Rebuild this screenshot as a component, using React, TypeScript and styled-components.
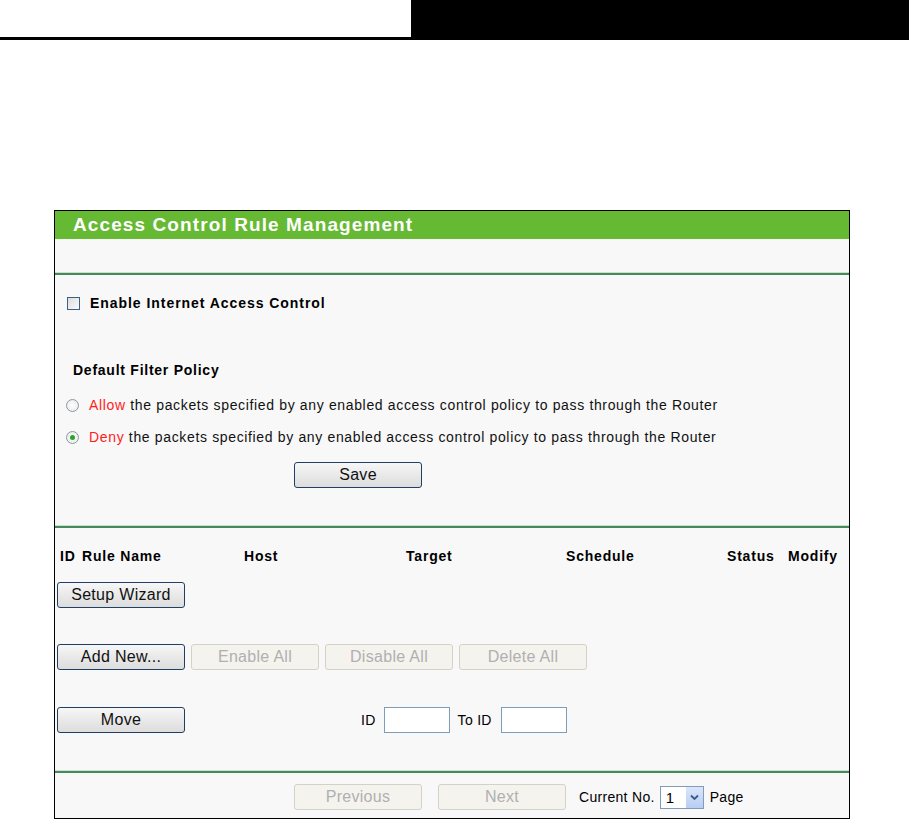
import styled, { createGlobalStyle } from 'styled-components';

const GlobalStyle = createGlobalStyle`
  html, body {
    margin: 0;
    padding: 0;
    background: #ffffff;
  }
  body {
    font-family: 'Liberation Sans', Arial, sans-serif;
    color: #000;
  }
`;

const TopBar = styled.div`
  display: flex;
  height: 40px;
`;

const TopLeft = styled.div`
  width: 411px;
  height: 37px;
  border-bottom: 3px solid #000;
`;

const TopRight = styled.div`
  flex: 1;
  background: #000;
`;

const Panel = styled.div`
  margin: 170px 0 0 54px;
  width: 794px;
  border: 1px solid #000;
  background: #f8f8f8;
  display: flex;
  flex-direction: column;
`;

const Header = styled.div`
  height: 28px;
  background: #66b933;
  color: #fff;
  font-weight: bold;
  font-size: 19px;
  letter-spacing: 1.1px;
  line-height: 28px;
  padding-left: 18px;
`;

const Spacer = styled.div<{ h: number }>`
  height: ${(p) => p.h}px;
  flex-shrink: 0;
`;

const Divider = styled.div`
  height: 2px;
  background: #448a5e;
  border-top: 1px solid #c9e0cf;
`;

const Section = styled.div<{ pt: number; pb: number }>`
  display: flex;
  flex-direction: column;
  padding: ${(p) => p.pt}px 0 ${(p) => p.pb}px;
`;

const CheckRow = styled.label`
  display: flex;
  align-items: center;
  height: 26px;
  padding-left: 12px;
  gap: 10px;
  font-weight: bold;
  font-size: 14px;
  letter-spacing: 0.95px;
`;

const CheckBox = styled.span`
  width: 11px;
  height: 11px;
  border: 1px solid #3c6186;
  background: linear-gradient(135deg, #dcdcdc, #fbfbfb);
`;

const Label = styled.div<{ mt: number }>`
  margin-top: ${(p) => p.mt}px;
  height: 20px;
  line-height: 20px;
  padding-left: 18px;
  font-weight: bold;
  font-size: 14px;
  letter-spacing: 0.75px;
`;

const RadioRow = styled.label<{ mt: number }>`
  display: flex;
  align-items: center;
  margin-top: ${(p) => p.mt}px;
  height: 20px;
  padding-left: 11px;
  gap: 10px;
  font-size: 14px;
  letter-spacing: 0.65px;
  color: #111;
`;

const Radio = styled.span<{ checked?: boolean }>`
  width: 11px;
  height: 11px;
  border: 1px solid #8c99a6;
  border-radius: 50%;
  background: radial-gradient(circle, #ffffff 0%, #e6e6e6 100%);
  display: flex;
  align-items: center;
  justify-content: center;
  &::after {
    content: '';
    display: ${(p) => (p.checked ? 'block' : 'none')};
    width: 5px;
    height: 5px;
    border-radius: 50%;
    background: #2aa52a;
  }
`;

const Red = styled.span`
  color: #ff1c1c;
`;

const Row = styled.div<{ mt: number; pl: number; gap?: number }>`
  display: flex;
  align-items: center;
  margin-top: ${(p) => p.mt}px;
  padding-left: ${(p) => p.pl}px;
  gap: ${(p) => p.gap ?? 0}px;
`;

const Button = styled.button<{ w?: number; ml?: number }>`
  width: ${(p) => p.w ?? 128}px;
  height: 26px;
  margin-left: ${(p) => p.ml ?? 0}px;
  padding: 0;
  border: 1px solid #213f63;
  border-radius: 3px;
  background: linear-gradient(#f7f7f7, #e9e9e9 50%, #dddddd);
  font-family: 'Liberation Sans', Arial, sans-serif;
  font-size: 16px;
  letter-spacing: 0.3px;
  color: #111;
  &:disabled {
    border-color: #d4d2c6;
    background: #f4f3ee;
    color: #b0b0b0;
  }
`;

const ColumnHead = styled.div`
  display: grid;
  grid-template-columns: 22px 162px 162px 160px 161px 61px auto;
  align-items: center;
  height: 20px;
  margin-top: 18px;
  padding-left: 5px;
  font-weight: bold;
  font-size: 14px;
  letter-spacing: 0.8px;
`;

const Text = styled.span<{ ml?: number; mr?: number }>`
  font-size: 14px;
  letter-spacing: 0.3px;
  margin-left: ${(p) => p.ml ?? 0}px;
  margin-right: ${(p) => p.mr ?? 0}px;
`;

const Input = styled.input`
  width: 66px;
  height: 26px;
  box-sizing: border-box;
  border: 1px solid #7f9db9;
  background: #fff;
  padding: 0 3px;
`;

const Select = styled.div`
  display: flex;
  align-items: center;
  width: 44px;
  height: 23px;
  box-sizing: border-box;
  border: 1px solid #7f9db9;
  background: #fff;
  margin: 0 6px 0 5px;
`;

const SelectValue = styled.span`
  flex: 1;
  font-size: 15px;
  padding-left: 5px;
`;

const SelectArrow = styled.span`
  width: 17px;
  height: 21px;
  background: linear-gradient(#dbe6fb, #b8cdf5);
  display: flex;
  align-items: center;
  justify-content: center;
`;

export default function App() {
  return (
    <>
      <GlobalStyle />
      <TopBar>
        <TopLeft />
        <TopRight />
      </TopBar>
      <Panel>
        <Header>Access Control Rule Management</Header>
        <Spacer h={33} />
        <Divider />
        <Section pt={15} pb={37}>
          <CheckRow>
            <CheckBox />
            Enable Internet Access Control
          </CheckRow>
          <Label mt={44}>Default Filter Policy</Label>
          <RadioRow mt={15}>
            <Radio />
            <span>
              <Red>Allow</Red> the packets specified by any enabled access control policy to pass through the Router
            </span>
          </RadioRow>
          <RadioRow mt={12}>
            <Radio checked />
            <span>
              <Red>Deny</Red> the packets specified by any enabled access control policy to pass through the Router
            </span>
          </RadioRow>
          <Row mt={15} pl={239}>
            <Button>Save</Button>
          </Row>
        </Section>
        <Divider />
        <Section pt={0} pb={37}>
          <ColumnHead>
            <span>ID</span>
            <span>Rule Name</span>
            <span>Host</span>
            <span>Target</span>
            <span>Schedule</span>
            <span>Status</span>
            <span>Modify</span>
          </ColumnHead>
          <Row mt={16} pl={2}>
            <Button w={128}>Setup Wizard</Button>
          </Row>
          <Row mt={36} pl={2} gap={6}>
            <Button>Add New...</Button>
            <Button disabled>Enable All</Button>
            <Button disabled>Disable All</Button>
            <Button disabled>Delete All</Button>
          </Row>
          <Row mt={37} pl={2}>
            <Button>Move</Button>
            <Text ml={176} mr={8}>ID</Text>
            <Input />
            <Text ml={8} mr={9}>To ID</Text>
            <Input />
          </Row>
        </Section>
        <Divider />
        <Row mt={11} pl={239} gap={0}>
          <Button disabled>Previous</Button>
          <Button disabled ml={16}>Next</Button>
          <Text ml={13}>Current No.</Text>
          <Select>
            <SelectValue>1</SelectValue>
            <SelectArrow>
              <svg width="9" height="7" viewBox="0 0 9 7">
                <path d="M1 1.5 L4.5 5 L8 1.5" fill="none" stroke="#3a5a8c" strokeWidth="1.8" />
              </svg>
            </SelectArrow>
          </Select>
          <Text>Page</Text>
        </Row>
        <Spacer h={8} />
      </Panel>
    </>
  );
}
